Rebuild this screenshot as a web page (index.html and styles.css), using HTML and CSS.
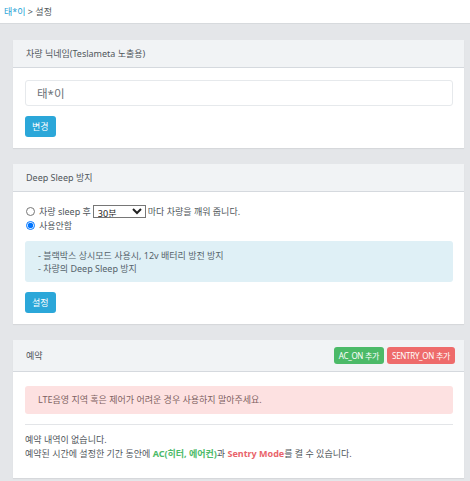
FILE: index.html
```html
<!DOCTYPE html>
<html lang="ko">
<head>
  <meta charset="UTF-8" />
  <meta name="viewport" content="width=device-width, initial-scale=1.0"/>
  <title>설정</title>
  <link rel="stylesheet" href="styles.css">
</head>
<body>

  <!-- Breadcrumb bar -->
  <div class="topbar">
    <a href="#" class="crumb-link">태*이</a> &gt; 설정
  </div>

  <div class="content">

    <!-- Nickname -->
    <div class="card">
      <div class="card-header">차량 닉네임(Teslameta 노출용)</div>
      <div class="card-body">
        <input type="text" class="form-input" value="태*이">
        <button class="btn btn-info">변경</button>
      </div>
    </div>

    <!-- Deep sleep -->
    <div class="card">
      <div class="card-header">Deep Sleep 방지</div>
      <div class="card-body">
        <label class="radio-row">
          <input type="radio" name="sleep"> 차량 sleep 후
          <select class="interval">
            <option>30분</option>
            <option>1시간</option>
            <option>2시간</option>
          </select>
          마다 차량을 깨워 줍니다.
        </label>
        <label class="radio-row">
          <input type="radio" name="sleep" checked> 사용안함
        </label>
        <div class="alert alert-info">
          - 블랙박스 상시모드 사용시, 12v 배터리 방전 방지<br>
          - 차량의 Deep Sleep 방지
        </div>
        <button class="btn btn-info">설정</button>
      </div>
    </div>

    <!-- Reservations -->
    <div class="card">
      <div class="card-header header-tools">
        <span>예약</span>
        <div class="tools">
          <button class="btn btn-sm btn-green">AC_ON 추가</button>
          <button class="btn btn-sm btn-red">SENTRY_ON 추가</button>
        </div>
      </div>
      <div class="card-body body-tall">
        <div class="alert alert-danger">LTE음영 지역 혹은 제어가 어려운 경우 사용하지 말아주세요.</div>
        <hr class="divider">
        <p class="notice">
          예약 내역이 없습니다.<br>
          예약된 시간에 설정한 기간 동안에 <b class="txt-green">AC(히터, 에어컨)</b>과 <b class="txt-red">Sentry Mode</b>를 켤 수 있습니다.
        </p>
      </div>
    </div>

  </div>

</body>
</html>
```

FILE: styles.css
```css
html, body {
  margin: 0;
  padding: 0;
}

body {
  background: #e4e6e9;
  font-family: "Noto Sans", "Noto Sans CJK KR", sans-serif;
  font-size: 9px;
  color: #50565b;
}

.topbar {
  height: 23px;
  line-height: 23px;
  padding-left: 4px;
  background: #fff;
  border-bottom: 1px solid #d7dadd;
}

.crumb-link {
  color: #2aa3d6;
  text-decoration: none;
}

.content {
  padding: 16px 6px 0 13px;
}

.card {
  background: #fff;
  margin-bottom: 16px;
  box-shadow: 0 1px 1px rgba(0, 0, 0, 0.06);
}

.card-header {
  height: 27px;
  line-height: 27px;
  padding: 0 13px;
  background: #f1f3f5;
  border-bottom: 1px solid #d5d9de;
}

.header-tools {
  height: 31px;
  line-height: normal;
  display: flex;
  justify-content: space-between;
  align-items: center;
  padding-right: 9px;
}

.tools {
  display: flex;
  gap: 3px;
}

.card-body {
  padding: 12px 11px 11px 12px;
}

.body-tall {
  padding-top: 14px;
  padding-bottom: 17px;
}

.form-input {
  display: block;
  box-sizing: border-box;
  width: 100%;
  height: 26px;
  margin: 0 0 10px;
  padding: 0 11px;
  border: 1px solid #e6e9ec;
  border-radius: 3px;
  font-family: inherit;
  font-size: 11.5px;
  color: #6c7277;
}

.btn {
  border: none;
  border-radius: 3px;
  font-family: inherit;
  font-size: 9px;
  color: #fff;
  height: 21px;
  padding: 0 7px;
  cursor: pointer;
}

.btn-info {
  background: #2ba7d9;
}

.btn-sm {
  height: 17px;
  padding: 0 5px;
  font-size: 8px;
  letter-spacing: -0.3px;
}

.btn-green {
  background: #4cba68;
}

.btn-red {
  background: #ee6b6b;
}

.radio-row {
  display: flex;
  align-items: center;
  height: 13.5px;
  gap: 2px;
}

.radio-row:first-child {
  margin-top: 1px;
}

.radio-row input[type="radio"] {
  width: 9px;
  height: 9px;
  margin: 0 2px 0 1px;
}

.interval {
  width: 53px;
  height: 13px;
  padding: 0;
  font-family: inherit;
  font-size: 9px;
  border: 1px solid #767676;
  border-radius: 0;
  background: #fff;
  color: #222;
}

.alert {
  border-radius: 3px;
  padding: 0 13px;
}

.alert-info {
  margin: 9px 0 10px;
  padding-top: 8px;
  padding-bottom: 7px;
  line-height: 13px;
  background: #dff0f6;
  color: #55636b;
}

.alert-danger {
  height: 28px;
  line-height: 28px;
  background: #fde1e1;
  color: #7d6262;
}

.divider {
  border: none;
  border-top: 1px solid #e3e5e8;
  margin: 10px 0 8px;
}

.notice {
  margin: 0;
  line-height: 14px;
}

.txt-green {
  color: #4cba68;
}

.txt-red {
  color: #e9636a;
}
```
